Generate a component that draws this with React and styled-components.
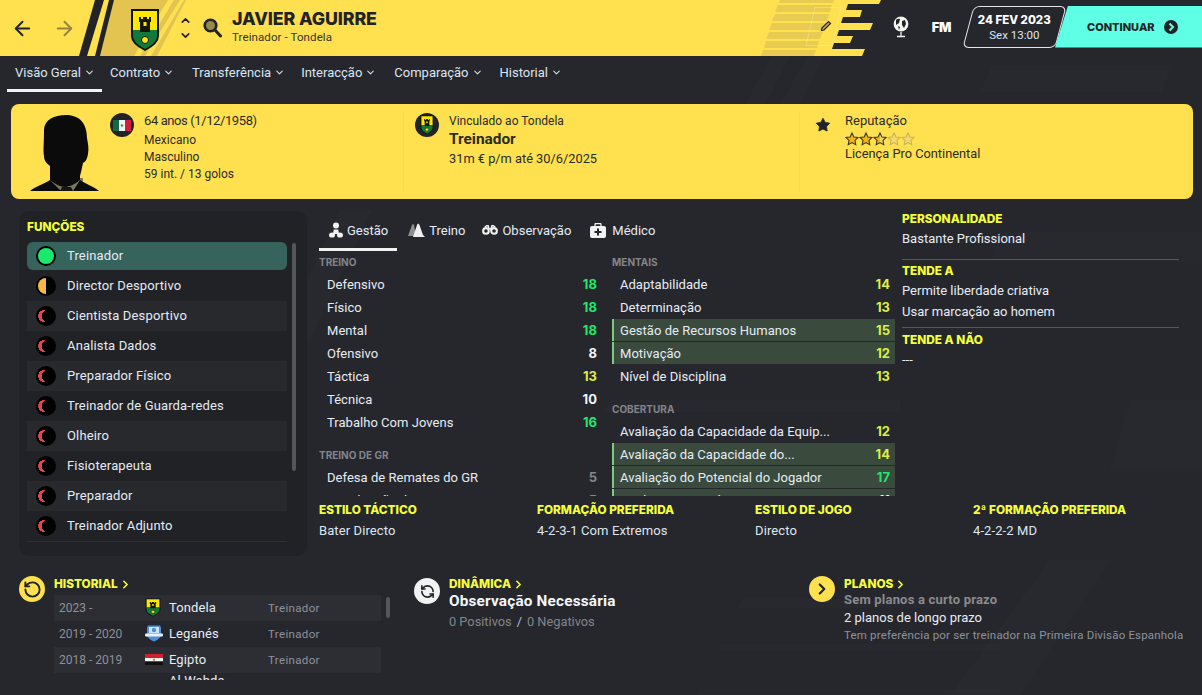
import React from 'react';
import styled, {createGlobalStyle} from 'styled-components';
import {ArrowLeft, ArrowRight, ChevronDown, ChevronUp, ChevronRight, RotateCcw, RefreshCcw, Star} from 'lucide-react';

const YELLOW = '#ffe04f'
const LABEL = '#f4ff3c'
const DARK = '#26272c'
const BODY = '"Roboto", "Liberation Sans", sans-serif'
const HEAVY = '"Inter", "Liberation Sans", sans-serif'

const Global = createGlobalStyle`
html, body { margin: 0; padding: 0; background: ${DARK}; }
* { box-sizing: border-box; }
`

const Page = styled.div`
position: relative;
width: 1202px;
height: 695px;
overflow: hidden;
background: ${DARK};
color: #e8edf5;
font-family: ${BODY};
font-size: 13px;
`
const Backdrop = styled.svg`
position: absolute;
left: 0;
top: 0;
`
const Layer = styled.div`
position: relative;
`

/* header */
const Header = styled.header`
position: relative;
height: 56px;
display: flex;
align-items: flex-start;
`
const HeaderArt = styled.svg`
position: absolute;
left: 0;
top: 0;
`
const HeaderLeft = styled.div`
position: relative;
flex: 1;
height: 56px;
display: flex;
align-items: center;
color: #222327;
`
const NavArrow = styled.span`
display: flex;
margin-left: ${p => p.$left}px;
color: ${p => p.$muted ? '#94843f' : '#222327'};
`
const CrestSlot = styled.span`
display: flex;
margin-left: 54px;
margin-top: 4px;
`
const UpDown = styled.span`
display: flex;
flex-direction: column;
align-items: center;
margin-left: 19px;
gap: 2px;
`
const SearchSlot = styled.span`
display: flex;
margin-left: 11px;
`
const Who = styled.div`
margin-left: 10px;
margin-top: -3px;
`
const Name = styled.div`
font-family: ${HEAVY};
font-weight: 800;
font-size: 17.8px;
line-height: 22px;
letter-spacing: -0.1px;
color: #222327;
`
const Role = styled.div`
font-size: 11.5px;
line-height: 15px;
letter-spacing: 0.1px;
color: #34342c;
`
const PencilSlot = styled.span`
position: relative;
height: 52px;
display: flex;
align-items: center;
margin-right: 61px;
`
const HeaderRight = styled.div`
position: relative;
height: 53px;
display: flex;
align-items: center;
`
const GlobeSlot = styled.span`
display: flex;
margin-right: 23px;
`
const FmMark = styled.span`
font-family: ${HEAVY};
font-weight: 900;
font-size: 13px;
letter-spacing: -0.4px;
color: #fff;
margin-right: 17px;
`
const DateChip = styled.div`
width: 93px;
height: 42px;
background: ${DARK};
border: 1.5px solid #e6e6ea;
border-radius: 6px;
transform: skewX(-15deg);
display: flex;
align-items: center;
justify-content: center;
`
const DateText = styled.div`
transform: skewX(15deg);
text-align: center;
`
const DateMain = styled.div`
font-family: ${HEAVY};
font-weight: 800;
font-size: 11.5px;
line-height: 16px;
color: #fff;
white-space: nowrap;
`
const DateSub = styled.div`
font-size: 11.5px;
line-height: 15px;
color: #dfe5ef;
`
const Continue = styled.div`
position: relative;
width: 147px;
height: 42px;
margin-left: -6px;
background: #5effe4;
clip-path: polygon(13px 0, 100% 0, 100% 100%, 0 100%);
display: flex;
align-items: center;
padding-left: 32px;
gap: 9px;
font-family: ${HEAVY};
font-weight: 800;
font-size: 11px;
color: #222327;
`

/* sub navigation */
const Nav = styled.nav`
height: 36px;
display: flex;
padding-left: 7px;
`
const NavItem = styled.div`
height: 36px;
padding: 0 ${p => p.$pad}px 1px 8px;
display: flex;
align-items: center;
gap: 3px;
font-size: 13px;
color: #dbe5f2;
border-bottom: 3px solid ${p => p.$active ? '#f2f2f2' : 'transparent'};
`

/* summary card */
const Card = styled.section`
height: 95px;
margin: 12px 9px 0 11px;
background: ${YELLOW};
border-radius: 8px;
display: flex;
color: #2b2b26;
`
const CardCol = styled.div`
width: ${p => p.$w}px;
display: flex;
align-items: flex-start;
margin: 8px 0 8px;
padding-top: 1px;
border-left: ${p => p.$line ? '1px solid #f0d868' : 'none'};
padding-left: ${p => p.$pad}px;
`
const Silhouette = styled.svg`
flex: none;
margin: 1px 11px 0 4px;
`
const Medal = styled.span`
flex: none;
width: 24px;
height: 24px;
border-radius: 50%;
background: #222327;
display: flex;
align-items: center;
justify-content: center;
overflow: hidden;
margin-right: ${p => p.$gap}px;
`
const Lines = styled.div`
display: flex;
flex-direction: column;
`
const CardLine = styled.div`
font-size: ${p => p.$size || 12}px;
line-height: ${p => p.$lh || 17}px;
margin-bottom: ${p => p.$mb || 0}px;
letter-spacing: ${p => p.$ls || 0}px;
font-weight: ${p => p.$bold ? 700 : 400};
white-space: nowrap;
`
const StarIcon = styled.span`
display: flex;
width: 16px;
margin: 4px 14px 0 0;
color: #222327;
`
const Stars = styled.div`
display: flex;
height: 14px;
margin: 3px 0 0;
`

/* main area */
const Main = styled.main`
height: 345px;
margin-top: 12px;
padding-left: 19px;
display: flex;
`
const Panel = styled.aside`
width: 288px;
height: 345px;
padding: 9px 8px 0;
background: #212226;
border-radius: 10px;
`
const Label = styled.div`
font-family: ${HEAVY};
font-weight: 800;
font-size: 11.8px;
line-height: 14px;
color: ${LABEL};
white-space: nowrap;
`
const PanelBody = styled.div`
margin-top: 7px;
display: flex;
gap: 5px;
`
const RoleList = styled.div`
width: 260px;
height: 301px;
border-bottom: 1px solid #2f3035;
`
const RoleRow = styled.div`
height: ${p => p.$selected ? 28 : 30}px;
margin: ${p => p.$selected ? '1px 0' : '0'};
display: flex;
align-items: center;
padding-left: 9px;
gap: 11px;
background: ${p => p.$selected ? '#36635c' : p.$alt ? '#28292d' : 'transparent'};
border-radius: ${p => p.$selected ? 6 : 0}px;
letter-spacing: 0.15px;
color: #e4ebf5;
`
const RoleName = styled.span`
margin-top: -2px;
`
const Indicator = styled.span`
width: 20px;
height: 20px;
border-radius: 50%;
background: #000;
padding: 2px;
&::before {
  content: '';
  display: block;
  width: 16px;
  height: 16px;
  border-radius: 50%;
  background: ${p => p.$level === 'full' ? '#19e96c'
    : p.$level === 'half' ? 'linear-gradient(90deg, #f6b945 50%, #000 50%)'
    : 'radial-gradient(circle 6px at 9.5px 8px, #000 98%, transparent 100%), radial-gradient(circle 6px at 6px 8px, #e0484d 98%, transparent 100%)'};
}
`
const Scrollbar = styled.div`
flex: none;
width: 4px;
height: ${p => p.$h}px;
margin-top: 2px;
border-radius: 2px;
background: #55565a;
`
const Center = styled.div`
width: 576px;
margin-left: 12px;
`
const Tabs = styled.div`
height: 40px;
display: flex;
`
const Tab = styled.div`
height: 40px;
display: flex;
align-items: center;
gap: ${p => p.$gap}px;
padding: 1px ${p => p.$pr}px 0 ${p => p.$pl}px;
border-bottom: 3px solid ${p => p.$active ? '#f2f2f2' : 'transparent'};
color: #e4ebf5;
`
const AttrGrid = styled.div`
height: 245px;
overflow: hidden;
display: grid;
grid-template-columns: 283px 283px;
column-gap: 10px;
padding-top: 4px;
`
const SectionHead = styled.div`
font-family: ${HEAVY};
font-weight: 700;
font-size: 10px;
line-height: 14px;
color: #84858a;
margin: ${p => p.$gap ? '15px' : '0'} 0 4px;
`
const AttrRow = styled.div`
height: 22px;
margin-bottom: 1px;
display: flex;
align-items: center;
justify-content: space-between;
padding: 0 5px 0 ${p => p.$hot ? 6 : 8}px;
background: ${p => p.$hot ? '#3a4a3c' : 'transparent'};
border-left: ${p => p.$hot ? '2px solid #7fc983' : 'none'};
letter-spacing: 0.03px;
color: #e6ecf5;
white-space: nowrap;
`
const Value = styled.span`
font-family: ${HEAVY};
font-weight: 700;
font-size: 13px;
color: ${p => p.$c};
`
const StatGrid = styled.div`
display: grid;
grid-template-columns: repeat(4, 218px);
margin-top: 7px;
`
const StatValue = styled.div`
margin-top: 7px;
line-height: 14px;
letter-spacing: 0.1px;
color: #dfe6f0;
`
const Side = styled.div`
width: 277px;
margin-left: 7px;
margin-top: 1px;
`
const SideValue = styled.div`
line-height: 21px;
color: #e6ecf5;
`
const SideBlock = styled.div`
padding: 0 0 ${p => p.$pb}px;
margin-bottom: ${p => p.$mb}px;
border-bottom: ${p => p.$line ? '1px solid #56575c' : 'none'};
`
const SideLabel = styled(Label)`
margin-bottom: 2px;
`

/* bottom */
const Bottom = styled.div`
margin-top: 20px;
padding-left: 19px;
display: flex;
`
const BottomBlock = styled.div`
width: ${p => p.$w}px;
display: flex;
gap: 9px;
`
const Round = styled.span`
flex: none;
width: 26px;
height: 26px;
margin-top: ${p => p.$top || 0}px;
border-radius: 50%;
background: ${p => p.$white ? '#f2f2f2' : YELLOW};
color: #222327;
display: flex;
align-items: center;
justify-content: center;
`
const LinkLabel = styled(Label)`
display: flex;
align-items: center;
gap: 1px;
height: 14px;
margin-top: 1px;
`
const History = styled.div`
display: flex;
gap: 5px;
height: 85px;
margin-top: 4px;
overflow: hidden;
`
const HistoryRows = styled.div`
width: 327px;
`
const HistoryRow = styled.div`
height: 26px;
display: grid;
grid-template-columns: 86px 24px 99px 1fr;
align-items: ${p => p.$wrapped ? 'start' : 'center'};
padding-left: 5px;
padding-bottom: 1px;
line-height: 16px;
background: ${p => p.$alt ? '#2d2e33' : 'transparent'};
`
const Years = styled.span`
font-size: 12px;
color: #8f9096;
`
const CrestCell = styled.span`
display: flex;
`
const Club = styled.span`
letter-spacing: 0.1px;
color: #e6ecf5;
`
const ClubRole = styled.span`
font-size: 11.5px;
letter-spacing: 0.35px;
color: #8d929c;
`
const Title = styled.div`
font-weight: 700;
font-size: ${p => p.$size}px;
line-height: ${p => p.$lh}px;
letter-spacing: 0.2px;
color: ${p => p.$c};
white-space: nowrap;
`
const Muted = styled.div`
font-size: 12.8px;
line-height: 19px;
margin-top: 1px;
color: #84858a;
`
const Slash = styled.span`
color: #9cc4ea;
margin: 0 5px;
`
const PlanLine = styled.div`
line-height: 19px;
color: #e6ecf5;
`
const PlanNote = styled.div`
font-size: 11.5px;
line-height: 17px;
letter-spacing: 0.18px;
white-space: nowrap;
color: #8d929c;
`

const Crest = ({w = 30, h = 44}) => (
    <svg width={w} height={h} viewBox="0 0 30 44" preserveAspectRatio="none">
        <path d="M1 1H29V28Q29 36 15 43Q1 36 1 28Z" fill="#111"/>
        <path d="M3 3H27V22H3Z" fill="#ffe800"/>
        <path d="M3 22H27V28Q27 35 15 41Q3 35 3 28Z" fill="#0f7a3a"/>
        <path d="M9 9h2v2h2V9h4v2h2V9h2v5h-1v10H10V14H9Z" fill="#16160c"/>
        <rect x="13.5" y="14" width="3" height="4" fill="#ffe800"/>
        <circle cx="15" cy="32" r="3.5" fill="#ffe800" stroke="#111"/>
    </svg>
)

const Leganes = () => (
    <svg width="18" height="17" viewBox="0 0 18 17">
        <path d="M3 .5H15L16 2.500V11.500Q13 15 9 16.500Q5 15 2 11.500V2.500Z" fill="#4f8fd6"/>
        <path d="M4 2H14V8H4Z" fill="#cfe4f7"/>
        <circle cx="9" cy="5" r="2.200" fill="#4f8fd6"/>
        <rect x="0" y="8.500" width="18" height="3" rx="1" fill="#e6f1fb"/>
    </svg>
)

const Egypt = () => (
    <svg width="18" height="11" viewBox="0 0 18 11">
        <rect width="18" height="4" fill="#d3202e"/>
        <rect y="4" width="18" height="3.5" fill="#f4f4f4"/>
        <rect y="7.5" width="18" height="3.5" fill="#111"/>
        <rect x="8" y="4.6" width="2" height="2.2" fill="#b8932f"/>
    </svg>
)

const Mexico = () => (
    <svg width="18" height="11" viewBox="0 0 18 11">
        <rect width="6" height="11" fill="#0f6b49"/>
        <rect x="6" width="6" height="11" fill="#f4f4f4"/>
        <rect x="12" width="6" height="11" fill="#ce1f3f"/>
        <circle cx="9" cy="5.5" r="1.3" fill="#8a7a3c"/>
    </svg>
)

const HeadShape = () => (
    <Silhouette width="69" height="77" viewBox="0 0 69 77">
        <path d="M20 64H53V77H20Z" fill="#7b7a60"/>
        <path d="M14 16C14 6 24 1 36 1C50 1 57 10 57 24C58 30 59 34 58 40C57 46 55 48 53 49C52 54 51 58 50 62V66C44 71 38 73 35 73C30 73 25 70 20 66V52C18 50 14 48 14 42C13 36 14 30 14 16Z" fill="#0b0b0b"/>
        <path d="M0 77C6 72 14 70 20 66L31 77Z" fill="#0b0b0b"/>
        <path d="M69 77C63 72 56 70 50 66L43 77Z" fill="#0b0b0b"/>
        <path d="M32 73H41L43 77H30Z" fill="#16160f"/>
    </Silhouette>
)

const RatingStar = ({fill}) => (
    <svg width="14" height="14" viewBox="0 0 24 24">
        <defs>
            <linearGradient id="partstar">
                <stop offset="50%" stopColor="#f3b613"/>
                <stop offset="50%" stopColor="#f3d86a"/>
            </linearGradient>
        </defs>
        <path d="M12 1.5l3.2 6.9 7.3.9-5.4 5.1 1.4 7.4L12 18.2 5.5 21.8l1.400-7.400L1.500 9.300l7.300-.9Z"
            fill={fill === 1 ? '#f3b613' : fill === 0.5 ? 'url(#partstar)' : '#f3d86a'}
            stroke={fill === 0 ? '#c9b35a' : '#3a3420'} strokeWidth="1.800"/>
    </svg>
)

const Search = () => (
    <svg width="19" height="20" viewBox="0 0 19 20">
        <circle cx="7.5" cy="7.5" r="5.8" fill="#97894a" stroke="#222327" strokeWidth="2.6"/>
        <path d="M12 12L17.5 18" stroke="#222327" strokeWidth="3" strokeLinecap="round"/>
    </svg>
)

const Pencil = () => (
    <svg width="12" height="12" viewBox="0 0 12 12">
        <path d="M2 8L8.5 1.5L10.5 3.5L4 10L1.5 10.5Z" fill="#c9b24a" stroke="#222327" strokeWidth="1.2"/>
    </svg>
)

const Globe = () => (
    <svg width="16" height="22" viewBox="0 0 16 22">
        <circle cx="8" cy="8" r="7.4" fill="#f4f4f4"/>
        <path d="M3 4q2-2 4-1l-1 4-3 2ZM9 5l3-1 1 4-2 4-2-3ZM5 10l2 1-1 3Z" fill="#222327"/>
        <path d="M8 16v4M4 20.5h8" stroke="#f4f4f4" strokeWidth="1.3"/>
    </svg>
)

const ManagementIcon = () => (
    <svg width="14" height="16" viewBox="0 0 14 16" fill="#f2f2f2">
        <circle cx="7" cy="3.5" r="3"/>
        <path d="M4.8 7.5h4.4L10 12H4Z"/>
        <ellipse cx="3" cy="13" rx="3" ry="2.6"/>
        <ellipse cx="11" cy="13" rx="3" ry="2.6"/>
    </svg>
)

const TrainingIcon = () => (
    <svg width="17" height="16" viewBox="0 0 17 16">
        <path d="M0 14L4 3Q5 1 6 3L8 14Z" fill="#8e8f92"/>
        <path d="M5 15L9 3Q10 0 11.500 3L15 13L17 15Z" fill="#f0f0f0"/>
    </svg>
)

const BinocularsIcon = () => (
    <svg width="16" height="12" viewBox="0 0 17 12" fill="none" stroke="#f2f2f2" strokeWidth="2.2">
        <circle cx="4.200" cy="7" r="3"/>
        <circle cx="12.800" cy="7" r="3"/>
        <path d="M3 3L5 1.500H6.500L7.500 5H9.500L10.500 1.500H12L14 3" strokeWidth="1.600"/>
    </svg>
)

const MedicalIcon = () => (
    <svg width="16" height="15" viewBox="0 0 16 15">
        <path d="M5 3V1.500Q5 .5 6 .5H10Q11 .5 11 1.500V3" fill="none" stroke="#f2f2f2" strokeWidth="1.300"/>
        <rect y="3" width="16" height="12" rx="2" fill="#f2f2f2"/>
        <path d="M7 5.500H9V8H11.500V10H9V12.500H7V10H4.500V8H7Z" fill="#26272c"/>
    </svg>
)

const ContinueIcon = () => (
    <svg width="14" height="14" viewBox="0 0 14 14">
        <circle cx="7" cy="7" r="7" fill="#222327"/>
        <path d="M5.500 3.500L9 7L5.500 10.500" fill="none" stroke="#5effe4" strokeWidth="2"/>
    </svg>
)

const navItems = [
    {name: 'Visão Geral', active: true, pad: 7},
    {name: 'Contrato', pad: 10},
    {name: 'Transferência', pad: 8},
    {name: 'Interacção', pad: 10},
    {name: 'Comparação', pad: 9},
    {name: 'Historial', pad: 8},
]

const roles = [
    {name: 'Treinador', level: 'full'},
    {name: 'Director Desportivo', level: 'half'},
    {name: 'Cientista Desportivo'},
    {name: 'Analista Dados'},
    {name: 'Preparador Físico'},
    {name: 'Treinador de Guarda-redes'},
    {name: 'Olheiro'},
    {name: 'Fisioterapeuta'},
    {name: 'Preparador'},
    {name: 'Treinador Adjunto'},
]

const GREEN = '#1ee86a'
const LIME = '#dcee45'
const WHITE = '#f2f4f8'
const GREY = '#85868a'

const leftAttrs = [
    {head: 'TREINO', rows: [
        ['Defensivo', 18, GREEN], ['Físico', 18, GREEN], ['Mental', 18, GREEN], ['Ofensivo', 8, WHITE],
        ['Táctica', 13, LIME], ['Técnica', 10, WHITE], ['Trabalho Com Jovens', 16, GREEN],
    ]},
    {head: 'TREINO DE GR', rows: [['Defesa de Remates do GR', 5, GREY], ['Distribuição do GR', 5, GREY]]},
]

const rightAttrs = [
    {head: 'MENTAIS', rows: [
        ['Adaptabilidade', 14, LIME], ['Determinação', 13, LIME], ['Gestão de Recursos Humanos', 15, LIME, true],
        ['Motivação', 12, LIME, true], ['Nível de Disciplina', 13, LIME],
    ]},
    {head: 'COBERTURA', rows: [
        ['Avaliação da Capacidade da Equip...', 12, LIME], ['Avaliação da Capacidade do...', 14, LIME, true],
        ['Avaliação do Potencial do Jogador', 17, GREEN, true], ['Conhecimento Táctico', 11, WHITE, true],
    ]},
]

const stats = [
    ['ESTILO TÁCTICO', 'Bater Directo'],
    ['FORMAÇÃO PREFERIDA', '4-2-3-1 Com Extremos'],
    ['ESTILO DE JOGO', 'Directo'],
    ['2ª FORMAÇÃO PREFERIDA', '4-2-2-2 MD'],
]

const history = [
    {years: '2023 -', crest: <Crest w={16} h={19}/>, club: 'Tondela', role: 'Treinador'},
    {years: '2019 - 2020', crest: <Leganes/>, club: 'Leganés', role: 'Treinador'},
    {years: '2018 - 2019', crest: <Egypt/>, club: 'Egipto', role: 'Treinador'},
    {years: '', crest: null, club: 'Al Wahda', role: '', wrapped: true},
]

const AttrColumn = ({groups}) => (
    <div>
        {groups.map((group, i) =>
            <div key={group.head}>
                <SectionHead $gap={i > 0}>{group.head}</SectionHead>
                {group.rows.map(([name, value, color, hot]) =>
                    <AttrRow key={name} $hot={hot}>
                        <span>{name}</span>
                        <Value $c={color}>{value}</Value>
                    </AttrRow>
                )}
            </div>
        )}
    </div>
)

const App = () => {
    return (
        <Page>
            <Global/>
            <Backdrop width="1202" height="695" viewBox="0 0 1202 695">
                <g fill="#fff" fillOpacity="0.01">
                    <path d="M992 65H1172L1162 92H980Z"/>
                    <path d="M772 56H790L716 200H690Z"/>
                    <path d="M808 56H824L750 200H724Z"/>
                    <path d="M1000 232H1202V262H990Z"/>
                    <path d="M340 210H372L300 360H270Z"/>
                    <path d="M742 599H1000V608H738Z"/>
                    <path d="M720 644H1000V651H718Z"/>
                    <path d="M700 689H1000V695H698Z"/>
                    <path d="M1050 560H1110L1020 695H950Z"/>
                    <path d="M1130 400H1202V470H1110Z"/>
                    <path d="M610 400H900V412H604Z"/>
                </g>
            </Backdrop>
            <Layer>
                <Header>
                    <HeaderArt width="1202" height="56" viewBox="0 0 1202 56">
                        <path d="M0 0H881L879 4H848L846 10H862L860 17H843L841 23H873L870 30H839L837 36H853L850 43H834L832 49H865L862 56H0Z" fill={YELLOW}/>
                        <path d="M114 0H168L134 56H100Z" fill="#e3c451"/>
                        <path d="M174 0H180L145 56H140Z" fill="#e3c451"/>
                        <path d="M184 0H186L157 56H151Z" fill="#e3c451"/>
                        <path d="M95 0H104L87 56H79Z" fill="#222327"/>
                        <path d="M109 0H114L100 56H95Z" fill="#222327"/>
                        <g fill="#e8cc52">
                            <path d="M780 0H834L833 3H779Z"/>
                            <path d="M778 5H832L830 12H775Z"/>
                            <path d="M775 14H829L827 21H772Z"/>
                            <path d="M772 23H826L824 30H769Z"/>
                            <path d="M769 32H823L820 39H766Z"/>
                            <path d="M766 41H819L817 48H764Z"/>
                            <path d="M763 50H816L814 56H761Z"/>
                        </g>
                        <path d="M815 7.500H841L832 45.500H806Z" fill="none" stroke="#fff" strokeOpacity="0.25"/>
                    </HeaderArt>
                    <HeaderLeft>
                        <NavArrow $left={11}><ArrowLeft size={23} strokeWidth={2}/></NavArrow>
                        <NavArrow $left={19} $muted><ArrowRight size={23} strokeWidth={2}/></NavArrow>
                        <CrestSlot><Crest/></CrestSlot>
                        <UpDown>
                            <ChevronUp size={13} strokeWidth={3}/>
                            <ChevronDown size={13} strokeWidth={3}/>
                        </UpDown>
                        <SearchSlot><Search/></SearchSlot>
                        <Who>
                            <Name>JAVIER AGUIRRE</Name>
                            <Role>Treinador - Tondela</Role>
                        </Who>
                    </HeaderLeft>
                    <PencilSlot><Pencil/></PencilSlot>
                    <HeaderRight>
                        <GlobeSlot><Globe/></GlobeSlot>
                        <FmMark>FM</FmMark>
                        <DateChip>
                            <DateText>
                                <DateMain>24 FEV 2023</DateMain>
                                <DateSub>Sex 13:00</DateSub>
                            </DateText>
                        </DateChip>
                        <Continue>
                            CONTINUAR
                            <ContinueIcon/>
                        </Continue>
                    </HeaderRight>
                </Header>

                <Nav>
                    {navItems.map(item =>
                        <NavItem key={item.name} $active={item.active} $pad={item.pad}>
                            {item.name}
                            <ChevronDown size={11} strokeWidth={2.2}/>
                        </NavItem>
                    )}
                </Nav>

                <Card>
                    <CardCol $w={392} $pad={15}>
                        <HeadShape/>
                        <Medal $gap={10}><Mexico/></Medal>
                        <Lines>
                            <CardLine $size={13} $lh={16} $mb={3} $ls={-0.4}>64 anos (1/12/1958)</CardLine>
                            <CardLine>Mexicano</CardLine>
                            <CardLine>Masculino</CardLine>
                            <CardLine>59 int. / 13 golos</CardLine>
                        </Lines>
                    </CardCol>
                    <CardCol $w={396} $line $pad={11}>
                        <Medal $gap={10}><Crest w={14} h={20}/></Medal>
                        <Lines>
                            <CardLine $lh={16}>Vinculado ao Tondela</CardLine>
                            <CardLine $size={15.400} $lh={21} $bold>Treinador</CardLine>
                            <CardLine $size={12.800} $lh={18}>31m € p/m até 30/6/2025</CardLine>
                        </Lines>
                    </CardCol>
                    <CardCol $w={390} $line $pad={15}>
                        <StarIcon><Star size={16} fill="currentColor" strokeWidth={1}/></StarIcon>
                        <Lines>
                            <CardLine $size={13} $lh={16}>Reputação</CardLine>
                            <Stars>
                                <RatingStar fill={1}/>
                                <RatingStar fill={1}/>
                                <RatingStar fill={0.5}/>
                                <RatingStar fill={0}/>
                                <RatingStar fill={0}/>
                            </Stars>
                            <CardLine $size={12.800} $lh={16}>Licença Pro Continental</CardLine>
                        </Lines>
                    </CardCol>
                </Card>

                <Main>
                    <Panel>
                        <Label>FUNÇÕES</Label>
                        <PanelBody>
                            <RoleList>
                                {roles.map((role, i) =>
                                    <RoleRow key={role.name} $selected={i === 0} $alt={i % 2 === 0}>
                                        <Indicator $level={role.level}/>
                                        <RoleName>{role.name}</RoleName>
                                    </RoleRow>
                                )}
                            </RoleList>
                            <Scrollbar $h={228}/>
                        </PanelBody>
                    </Panel>

                    <Center>
                        <Tabs>
                            <Tab $active $pl={10} $pr={9} $gap={4}><ManagementIcon/>Gestão</Tab>
                            <Tab $pl={11} $pr={8} $gap={4}><TrainingIcon/>Treino</Tab>
                            <Tab $pl={9} $pr={9} $gap={4}><BinocularsIcon/>Observação</Tab>
                            <Tab $pl={10} $pr={6} $gap={6}><MedicalIcon/>Médico</Tab>
                        </Tabs>
                        <AttrGrid>
                            <AttrColumn groups={leftAttrs}/>
                            <AttrColumn groups={rightAttrs}/>
                        </AttrGrid>
                        <StatGrid>
                            {stats.map(([label, value]) =>
                                <div key={label}>
                                    <Label>{label}</Label>
                                    <StatValue>{value}</StatValue>
                                </div>
                            )}
                        </StatGrid>
                    </Center>

                    <Side>
                        <SideBlock $line $pb={10} $mb={4}>
                            <SideLabel>PERSONALIDADE</SideLabel>
                            <SideValue>Bastante Profissional</SideValue>
                        </SideBlock>
                        <SideBlock $line $pb={5} $mb={5}>
                            <SideLabel>TENDE A</SideLabel>
                            <SideValue>Permite liberdade criativa</SideValue>
                            <SideValue>Usar marcação ao homem</SideValue>
                        </SideBlock>
                        <SideBlock $pb={0} $mb={0}>
                            <SideLabel>TENDE A NÃO</SideLabel>
                            <SideValue>---</SideValue>
                        </SideBlock>
                    </Side>
                </Main>

                <Bottom>
                    <BottomBlock $w={395}>
                        <Round><RotateCcw size={19} strokeWidth={2.4}/></Round>
                        <div>
                            <LinkLabel>HISTORIAL <ChevronRight size={13} strokeWidth={3}/></LinkLabel>
                            <History>
                                <HistoryRows>
                                    {history.map((row, i) =>
                                        <HistoryRow key={row.club} $alt={i % 2 === 0} $wrapped={row.wrapped}>
                                            <Years>{row.years}</Years>
                                            <CrestCell>{row.crest}</CrestCell>
                                            <Club>{row.club}</Club>
                                            <ClubRole>{row.role}</ClubRole>
                                        </HistoryRow>
                                    )}
                                </HistoryRows>
                                <Scrollbar $h={21}/>
                            </History>
                        </div>
                    </BottomBlock>
                    <BottomBlock $w={395}>
                        <Round $white $top={2}><RefreshCcw size={15} strokeWidth={2.6}/></Round>
                        <div>
                            <LinkLabel>DINÂMICA <ChevronRight size={13} strokeWidth={3}/></LinkLabel>
                            <Title $size={15.300} $lh={20} $c="#f4f6fa">Observação Necessária</Title>
                            <Muted>0 Positivos<Slash>/</Slash>0 Negativos</Muted>
                        </div>
                    </BottomBlock>
                    <BottomBlock $w={380}>
                        <Round><ChevronRight size={18} strokeWidth={3}/></Round>
                        <div>
                            <LinkLabel>PLANOS <ChevronRight size={13} strokeWidth={3}/></LinkLabel>
                            <Title $size={13} $lh={17} $c="#8a8b8f">Sem planos a curto prazo</Title>
                            <PlanLine>2 planos de longo prazo</PlanLine>
                            <PlanNote>Tem preferência por ser treinador na Primeira Divisão Espanhola</PlanNote>
                        </div>
                    </BottomBlock>
                </Bottom>
            </Layer>
        </Page>
    );
};

export default App;
